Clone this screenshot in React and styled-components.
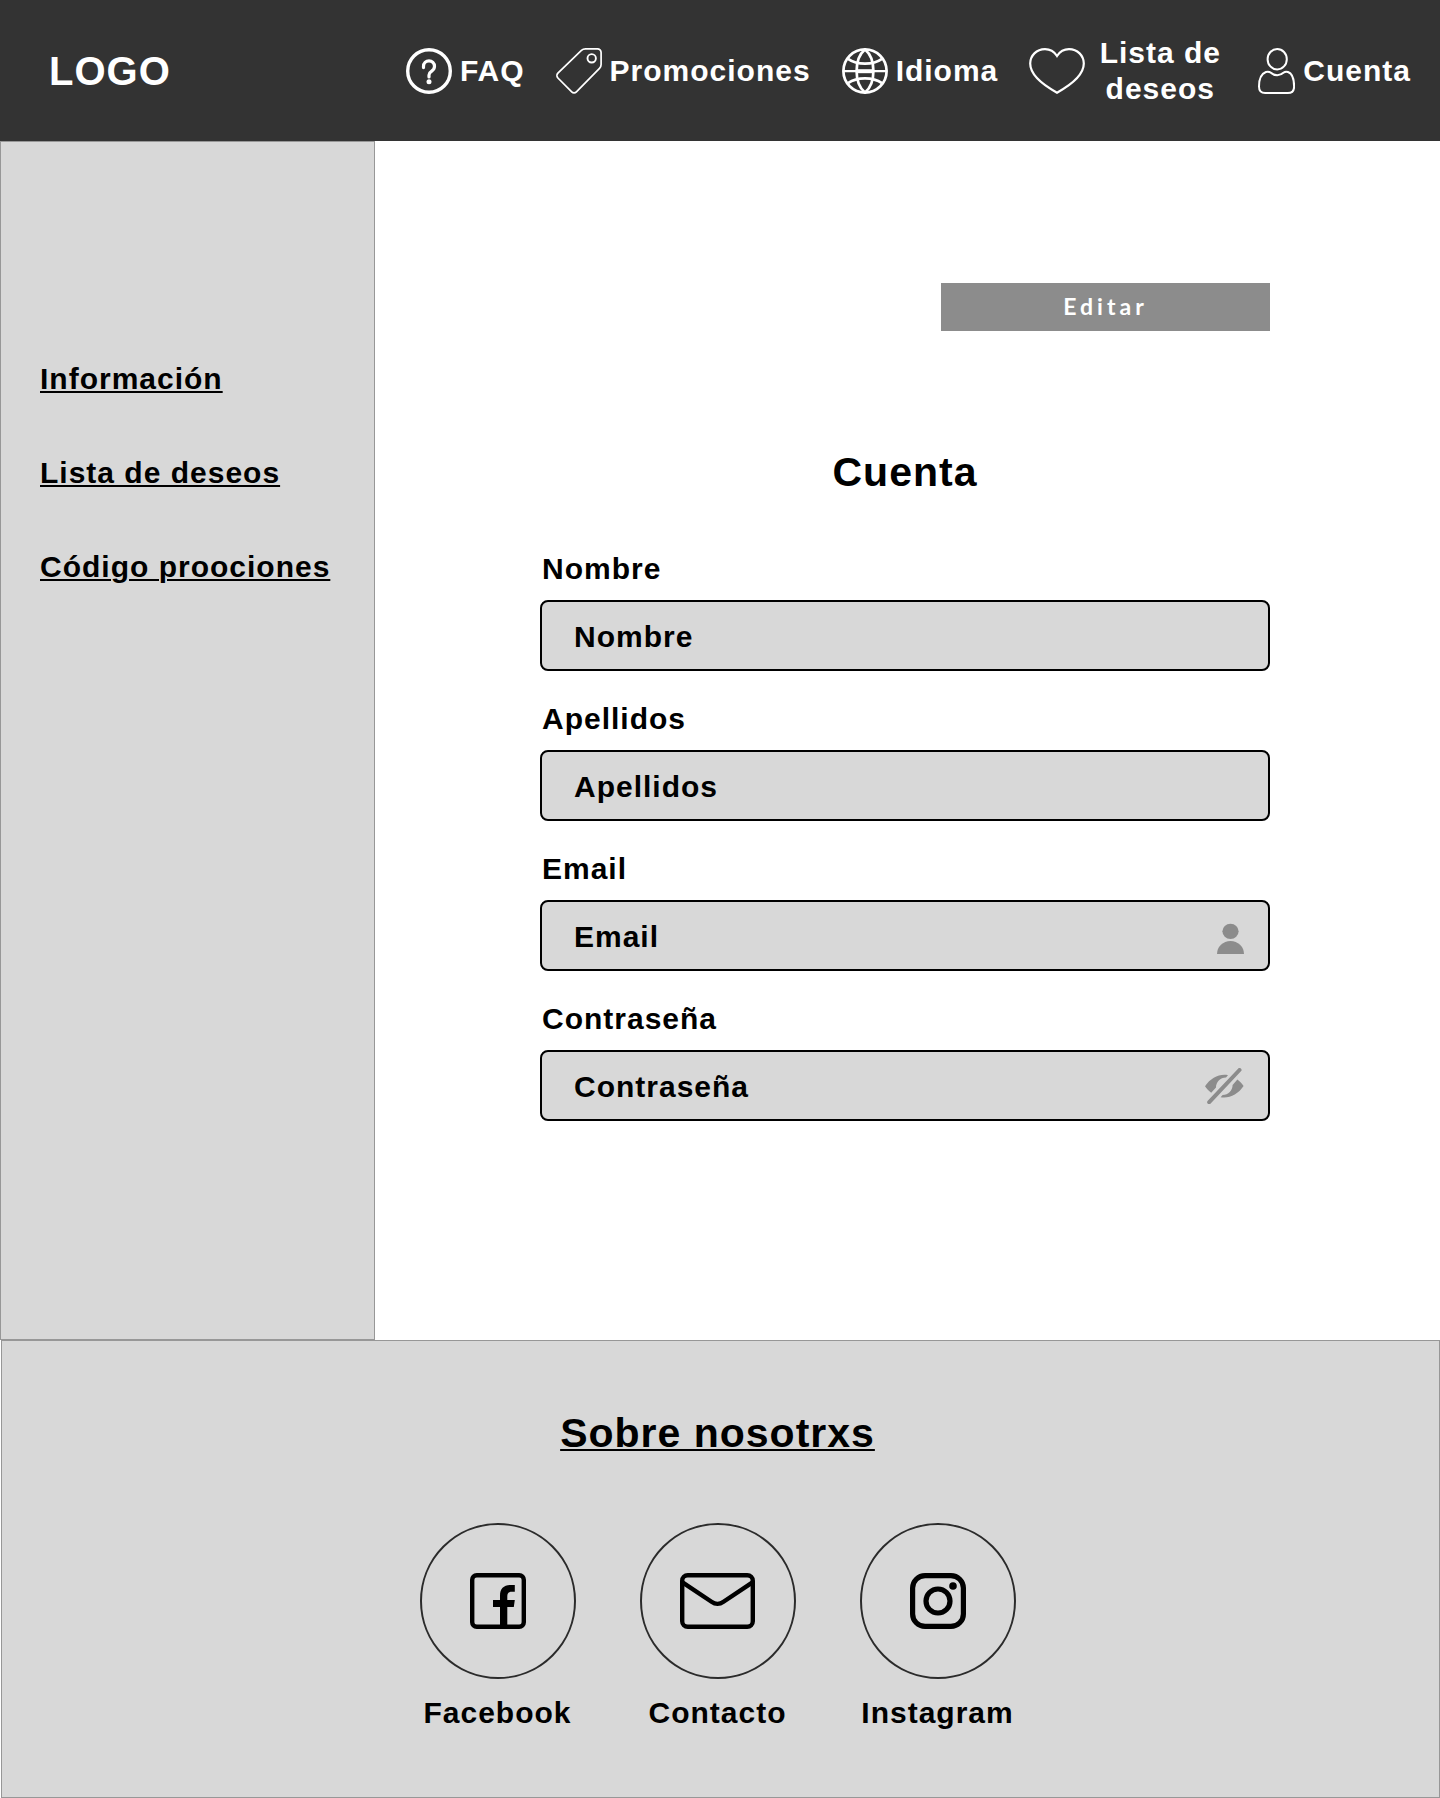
import React, { useState } from "react";
import styled, { createGlobalStyle } from "styled-components";

const GlobalStyle = createGlobalStyle`
  *, *::before, *::after { box-sizing: border-box; }
  body {
    margin: 0;
    background: #fff;
    color: #000;
    font-family: "Liberation Sans", Arial, sans-serif;
    font-size: 30px;
    font-weight: 700;
    line-height: 36px;
    letter-spacing: 1px;
  }
  a { color: inherit; }
`;

const Page = styled.div`
  display: flex;
  flex-direction: column;
  min-height: 100vh;
`;

const Header = styled.header`
  display: flex;
  align-items: center;
  justify-content: space-between;
  min-height: 141px;
  padding: 0 29px 0 49px;
  background: #333;
  color: #fff;
`;

const Logo = styled.a`
  font-size: 40px;
  line-height: 48px;
  text-decoration: none;
`;

const Nav = styled.nav`
  display: flex;
  align-items: center;
  gap: 31px;
`;

const NavLink = styled.a`
  display: flex;
  align-items: center;
  gap: 8px;
  text-decoration: none;
`;

const NavLabel = styled.span`
  width: ${(p) => p.$width || "auto"};
  text-align: center;
`;

const Icon = styled.svg`
  display: block;
  flex: none;
  fill: none;
  stroke: currentColor;
`;

const Body = styled.div`
  display: flex;
  flex: 1;
`;

const Sidebar = styled.aside`
  display: flex;
  flex: none;
  flex-direction: column;
  align-items: flex-start;
  gap: 58px;
  width: 375px;
  padding: 219px 32px 40px 39px;
  border: 1px solid #979797;
  background: #d8d8d8;
`;

const UnderlinedLink = styled.a`
  text-decoration: underline;
  text-decoration-thickness: 2px;
  text-underline-offset: 2px;
`;

const Main = styled.main`
  display: flex;
  flex: 1;
  flex-direction: column;
  min-width: 0;
  padding: 142px 170px 219px 165px;
`;

const EditButton = styled.button`
  align-self: flex-end;
  width: 329px;
  height: 48px;
  padding: 0 0 2px;
  border: 0;
  background: #8c8c8c;
  color: #fff;
  font-family: Lato, sans-serif;
  font-size: 23px;
  font-weight: 700;
  letter-spacing: 4px;
  cursor: pointer;
`;

const Title = styled.h1`
  margin: 117px 0 55px;
  font-size: 41px;
  line-height: 48px;
  text-align: center;
`;

const Form = styled.form`
  display: flex;
  flex-direction: column;
  gap: 30px;
`;

const Field = styled.div`
  display: flex;
  flex-direction: column;
  gap: 13px;
`;

const Label = styled.label`
  padding-left: 2px;
`;

const Control = styled.div`
  position: relative;
`;

const Input = styled.input`
  display: block;
  width: 100%;
  height: 71px;
  padding: 2px 80px 0 32px;
  border: 2px solid #000;
  border-radius: 8px;
  background: #d8d8d8;
  color: #000;
  font: inherit;
  letter-spacing: inherit;
  &::placeholder { color: #000; opacity: 1; }
`;

const Adornment = styled.span`
  position: absolute;
  top: 0;
  right: 26px;
  bottom: 0;
  display: flex;
  align-items: center;
  color: #8c8c8c;
`;

const ToggleButton = styled.button`
  padding: 0;
  border: 0;
  background: none;
  color: inherit;
  cursor: pointer;
`;

const Footer = styled.footer`
  display: flex;
  flex-direction: column;
  align-items: center;
  gap: 66px;
  margin-left: 1px;
  padding: 68px 6px 66px 0;
  border: 1px solid #979797;
  background: #d8d8d8;
`;

const FooterTitle = styled.h2`
  margin: 0;
  font-size: 41px;
  line-height: 48px;
`;

const SocialList = styled.div`
  display: flex;
  gap: 64px;
`;

const SocialLink = styled.a`
  display: flex;
  flex-direction: column;
  align-items: center;
  gap: 16px;
  width: 156px;
  text-decoration: none;
`;

const Circle = styled.span`
  display: flex;
  align-items: center;
  justify-content: center;
  width: 156px;
  height: 156px;
  border: 2px solid #2b2b2b;
  border-radius: 50%;
`;

const FaqIcon = () => (
  <Icon width="46" height="46" viewBox="0 0 46 46" aria-hidden="true">
    <circle cx="23" cy="23" r="21.3" strokeWidth="3.4" />
    <path d="M17.5 19.6v-1.3a5.5 5.5 0 0 1 11 0c0 2.4-1 3.6-2.8 4.8-1.8 1.2-2.7 2.2-2.7 3.8v2" strokeWidth="3.2" strokeLinecap="round" />
    <circle cx="23" cy="33.8" r="2.5" fill="currentColor" stroke="none" />
  </Icon>
);

const TagIcon = () => (
  <Icon width="46" height="46" viewBox="0 0 46 46" strokeWidth="1.7" aria-hidden="true">
    <path d="M29.6 .9h11.9a3.6 3.6 0 0 1 3.6 3.6v11.9c0 1.6-.5 2.9-1.6 4L20.4 43.8a3.3 3.3 0 0 1-4.7 0L1.9 30a3.4 3.4 0 0 1 0-4.8L25.4 2.4c1.2-1.1 2.5-1.5 4.2-1.5z" />
    <circle cx="35.7" cy="10.3" r="4.2" strokeWidth="1.9" />
  </Icon>
);

const GlobeIcon = () => (
  <Icon width="46" height="46" viewBox="0 0 46 46" strokeWidth="2.7" aria-hidden="true">
    <circle cx="23" cy="23" r="21.6" />
    <path d="M23 1.5C17.5 6 14.6 14 14.6 23S17.5 40 23 44.5C28.5 40 31.4 32 31.4 23S28.5 6 23 1.5z" />
    <path d="M1.5 23.2h43" strokeWidth="2.2" />
    <path d="M15 23.2h16" strokeWidth="4" />
    <path d="M6 10.8c4.3 3 10.2 4.8 17 4.8s12.7-1.8 17-4.8M6 35.2c4.3-3 10.2-4.8 17-4.8s12.7 1.8 17 4.8" />
  </Icon>
);

const HeartIcon = () => (
  <Icon width="56" height="46" viewBox="0 0 56 46" strokeWidth="2.2" aria-hidden="true">
    <path d="M28 8C25 3.5 21 1.2 16 1.2 7.5 1.2 1.2 7.6 1.2 15.6 1.2 26.5 14 37 28 44.7 42 37 54.8 26.5 54.8 15.6 54.8 7.6 48.5 1.2 40 1.2c-5 0-9 2.3-12 6.8z" />
  </Icon>
);

const AccountIcon = () => (
  <Icon width="37" height="46" viewBox="0 0 37 46" strokeWidth="2" aria-hidden="true">
    <ellipse cx="19.2" cy="11.2" rx="9.6" ry="10.2" />
    <path d="M12.5 24.6c2 1.8 4.2 2.7 6.7 2.7s4.6-.9 6.6-2.7c1.2-1.1 2.7-1.1 4.2-.6 4.300 1.600 6.100 7.400 6.100 14.500 0 4-2.300 6.500-6.300 6.500H7.200c-4 0-6.200-2.500-6.200-6.500 0-7.100 2.200-12.700 6.900-14.500 1.500-.5 3.300-.5 4.600.6z" />
  </Icon>
);

const UserIcon = () => (
  <Icon width="27" height="36" viewBox="0 0 27 36" aria-hidden="true">
    <g fill="currentColor" stroke="none">
      <ellipse cx="13.5" cy="13.3" rx="8.1" ry="7.6" />
      <path d="M0 36a13.5 13 0 0 1 27 0z" />
    </g>
  </Icon>
);

const EYE_HALF = "M0 18.3C5 11 12 6.8 19.5 6.8c1.3 0 2.4.1 3.5.4l-2 2.2c-5.8.2-10 4.5-10 10l-4.8 5.4C3.8 23.1 1.6 20.8 0 18.3z";

const HiddenEyeIcon = () => (
  <Icon width="39" height="36" viewBox="0 0 39 36" aria-hidden="true">
    <g fill="currentColor" stroke="none">
      <path d={EYE_HALF} />
      <path d={EYE_HALF} transform="rotate(180 19.3 18.2)" />
    </g>
    <path d="M4.2 34.2L34.5 2" strokeWidth="4" strokeLinecap="round" />
  </Icon>
);

const FacebookIcon = () => (
  <Icon width="56" height="56" viewBox="0 0 56 56" strokeWidth="4.4" aria-hidden="true">
    <rect x="2.2" y="2.2" width="51.6" height="51.6" rx="4.5" />
    <path d="M30 54V34h-7v-7h7v-4.5C30 15.5 34 12 41 12h3.8v6.8h-3c-3.3 0-4.5 1.5-4.5 4.5V27h7.5l-1 7h-6.5v20z" fill="currentColor" stroke="none" />
  </Icon>
);

const MailIcon = () => (
  <Icon width="75" height="56" viewBox="0 0 75 56" strokeWidth="4.4" aria-hidden="true">
    <rect x="2.2" y="2.2" width="70.6" height="51.6" rx="5.5" />
    <path d="M2.5 9.300l29 19.400c4 2.900 8 2.900 12 0l29-19.400" />
  </Icon>
);

const InstagramIcon = () => (
  <Icon width="56" height="56" viewBox="0 0 56 56" strokeWidth="5.2" aria-hidden="true">
    <rect x="2.6" y="2.6" width="50.8" height="50.8" rx="12.5" />
    <circle cx="28" cy="28" r="12" />
    <circle cx="43" cy="13" r="3.8" fill="currentColor" stroke="none" />
  </Icon>
);

const NAV = [
  { label: "FAQ", icon: FaqIcon },
  { label: "Promociones", icon: TagIcon },
  { label: "Idioma", icon: GlobeIcon },
  { label: "Lista de deseos", icon: HeartIcon, width: "134px" },
  { label: "Cuenta", icon: AccountIcon },
];

const SIDE_LINKS = ["Información", "Lista de deseos", "Código proociones"];

const SOCIAL = [
  { label: "Facebook", icon: FacebookIcon },
  { label: "Contacto", icon: MailIcon },
  { label: "Instagram", icon: InstagramIcon },
];

function TextField({ id, label, type = "text", children }) {
  return (
    <Field>
      <Label htmlFor={id}>{label}</Label>
      <Control>
        <Input id={id} name={id} type={type} placeholder={label} />
        {children && <Adornment>{children}</Adornment>}
      </Control>
    </Field>
  );
}

export default function App() {
  const [visible, setVisible] = useState(false);

  return (
    <Page>
      <GlobalStyle />
      <Header>
        <Logo href="#inicio">LOGO</Logo>
        <Nav aria-label="Principal">
          {NAV.map(({ label, icon: Glyph, width }) => (
            <NavLink key={label} href="#">
              <Glyph />
              <NavLabel $width={width}>{label}</NavLabel>
            </NavLink>
          ))}
        </Nav>
      </Header>

      <Body>
        <Sidebar>
          {SIDE_LINKS.map((label) => (
            <UnderlinedLink key={label} href="#">{label}</UnderlinedLink>
          ))}
        </Sidebar>
        <Main>
          <EditButton type="button">Editar</EditButton>
          <Title>Cuenta</Title>
          <Form onSubmit={(e) => e.preventDefault()}>
            <TextField id="nombre" label="Nombre" />
            <TextField id="apellidos" label="Apellidos" />
            <TextField id="email" label="Email" type="email">
              <UserIcon />
            </TextField>
            <TextField id="contrasena" label="Contraseña" type={visible ? "text" : "password"}>
              <ToggleButton type="button" aria-label="Mostrar contraseña" onClick={() => setVisible(!visible)}>
                <HiddenEyeIcon />
              </ToggleButton>
            </TextField>
          </Form>
        </Main>
      </Body>

      <Footer>
        <FooterTitle>
          <UnderlinedLink href="#">Sobre nosotrxs</UnderlinedLink>
        </FooterTitle>
        <SocialList>
          {SOCIAL.map(({ label, icon: Glyph }) => (
            <SocialLink key={label} href="#">
              <Circle><Glyph /></Circle>
              {label}
            </SocialLink>
          ))}
        </SocialList>
      </Footer>
    </Page>
  );
}
